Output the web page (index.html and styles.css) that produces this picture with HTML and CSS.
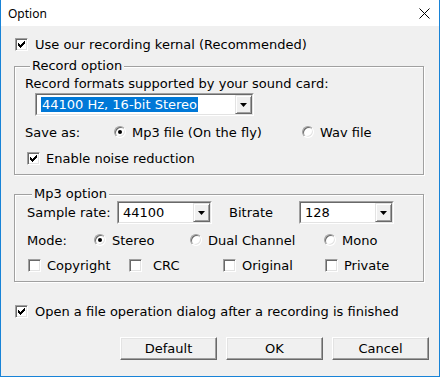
FILE: index.html
```html
<!DOCTYPE html>
<html lang="en">
<head>
    <meta charset="UTF-8">
    <title>Option</title>
    <link rel="stylesheet" href="styles.css">
</head>
<body>
    <div class="window">
        <div class="titlebar">
            <span class="title">Option</span>
            <svg class="close" width="11" height="11" viewBox="0 0 11 11">
                <path d="M0.5 0.5 L10.5 10.5 M10.5 0.5 L0.5 10.5" stroke="#000" stroke-width="1" fill="none"/>
            </svg>
        </div>

        <div class="dialog">
            <div class="row top-check">
                <span class="box"><svg width="11" height="11" viewBox="0 0 11 11"><path class="tick" d="M2 4h1v3H2z M3 5h1v3H3z M4 6h1v3H4z M5 5h1v3H5z M6 4h1v3H6z M7 3h1v3H7z M8 2h1v3H8z"/></svg></span>
                <span class="check-label">Use our recording kernal (Recommended)</span>
            </div>

            <fieldset class="group group-record">
                <legend>Record option</legend>
                <div class="row label-row">Record formats supported by your sound card:</div>
                <div class="combo combo-format">
                    <div class="combo-inner">
                        <span class="combo-text"><span class="selected">44100 Hz, 16-bit Stereo</span></span>
                        <span class="drop"><svg width="7" height="4" viewBox="0 0 7 4"><path d="M0 0h7L3.5 4z"/></svg></span>
                    </div>
                </div>
                <div class="row save-row">
                    <span class="save-label">Save as:</span>
                    <span class="option save-mp3"><span class="radio on"></span>Mp3 file (On the fly)</span>
                    <span class="option"><span class="radio"></span>Wav file</span>
                </div>
                <div class="row noise-row">
                    <span class="box"><svg width="11" height="11" viewBox="0 0 11 11"><path class="tick" d="M2 4h1v3H2z M3 5h1v3H3z M4 6h1v3H4z M5 5h1v3H5z M6 4h1v3H6z M7 3h1v3H7z M8 2h1v3H8z"/></svg></span>
                    <span class="check-label">Enable noise reduction</span>
                </div>
            </fieldset>

            <fieldset class="group group-mp3">
                <legend>Mp3 option</legend>
                <div class="row combo-row">
                    <span class="sample-label">Sample rate:</span>
                    <div class="combo combo-small">
                        <div class="combo-inner">
                            <span class="combo-text">44100</span>
                            <span class="drop"><svg width="7" height="4" viewBox="0 0 7 4"><path d="M0 0h7L3.5 4z"/></svg></span>
                        </div>
                    </div>
                    <span class="bitrate-label">Bitrate</span>
                    <div class="combo combo-small">
                        <div class="combo-inner">
                            <span class="combo-text">128</span>
                            <span class="drop"><svg width="7" height="4" viewBox="0 0 7 4"><path d="M0 0h7L3.5 4z"/></svg></span>
                        </div>
                    </div>
                </div>
                <div class="row mode-row">
                    <span class="mode-label">Mode:</span>
                    <span class="option mode-stereo"><span class="radio on"></span>Stereo</span>
                    <span class="option mode-dual"><span class="radio"></span>Dual Channel</span>
                    <span class="option"><span class="radio"></span>Mono</span>
                </div>
                <div class="row flags-row">
                    <span class="flag flag-copy"><span class="box"></span>Copyright</span>
                    <span class="flag flag-crc"><span class="box"></span>CRC</span>
                    <span class="flag flag-orig"><span class="box"></span>Original</span>
                    <span class="flag"><span class="box"></span>Private</span>
                </div>
            </fieldset>

            <div class="row bottom-check">
                <span class="box"><svg width="11" height="11" viewBox="0 0 11 11"><path class="tick" d="M2 4h1v3H2z M3 5h1v3H3z M4 6h1v3H4z M5 5h1v3H5z M6 4h1v3H6z M7 3h1v3H7z M8 2h1v3H8z"/></svg></span>
                <span class="check-label">Open a file operation dialog after a recording is finished</span>
            </div>

            <div class="buttons">
                <button class="btn">Default</button>
                <button class="btn btn-default">OK</button>
                <button class="btn">Cancel</button>
            </div>
        </div>
    </div>
</body>
</html>
```

FILE: styles.css
```css
* {
    box-sizing: border-box;
}
body {
    margin: 0;
    background: #fff;
    font-family: "DejaVu Sans", sans-serif;
    font-size: 13px;
    color: #000;
}
.window {
    width: 440px;
    height: 377px;
    border: 1px solid #1883d7;
    border-top: none;
    background: #f0f0f0;
    display: flex;
    flex-direction: column;
}
.titlebar {
    height: 26px;
    flex: none;
    background: #fff;
    display: flex;
    align-items: center;
    justify-content: space-between;
    padding: 0 9px 0 7px;
    font-family: "Noto Sans", sans-serif;
    font-size: 12px;
}
.close {
    display: block;
}
.dialog {
    padding: 0 0 0 13px;
    display: flex;
    flex-direction: column;
}
.row {
    display: flex;
    align-items: center;
    height: 22px;
    white-space: nowrap;
}

/* checkbox */
.box {
    width: 13px;
    height: 13px;
    flex: none;
    background: #fff;
    border: 1px solid;
    border-color: #a0a0a0 #fff #fff #a0a0a0;
    box-shadow: inset 1px 1px #696969, inset -1px -1px #e3e3e3;
    margin-right: 6px;
}
.box svg {
    display: block;
}
.tick {
    fill: #000;
}
.top-check {
    margin-top: 6px;
    height: 24px;
    padding-left: 1px;
}
.top-check .box,
.bottom-check .box {
    margin-right: 7px;
}

/* group boxes */
.group {
    margin: 0;
    padding: 0 0 5px;
    width: 410px;
    min-width: 0;
    border: 1px solid #a0a0a0;
    box-shadow: inset 1px 1px #fff, 1px 1px #fff;
}
.group legend {
    margin-left: 5px;
    padding: 0 2px;
    line-height: 14px;
    background: #f0f0f0;
}
.group-record {
    margin-top: 3px;
    padding-left: 10px;
}
.group-mp3 {
    margin-top: 12px;
    padding-left: 12px;
}
.label-row {
    height: 20px;
}

/* combo boxes */
.combo {
    height: 23px;
    flex: none;
    border: 1px solid;
    border-color: #a0a0a0 #fff #fff #a0a0a0;
    background: #fff;
}
.combo-inner {
    height: 100%;
    display: flex;
    align-items: center;
    border: 1px solid;
    border-color: #696969 #e3e3e3 #e3e3e3 #696969;
}
.combo-text {
    flex: 1;
    padding-left: 4px;
}
.selected {
    background: #0078d7;
    color: #fff;
    padding: 0 1px;
    line-height: 15px;
    display: inline-block;
}
.drop {
    width: 17px;
    height: 100%;
    flex: none;
    display: flex;
    align-items: center;
    justify-content: center;
    background: #f0f0f0;
    border: 1px solid;
    border-color: #e3e3e3 #696969 #696969 #e3e3e3;
    box-shadow: inset 1px 1px #fff, inset -1px -1px #a0a0a0;
}
.drop svg {
    display: block;
}
.combo-format {
    width: 219px;
    margin-left: 10px;
}
.combo-small {
    width: 95px;
}

/* radio buttons */
.option {
    display: flex;
    align-items: center;
}
.radio {
    width: 12px;
    height: 12px;
    flex: none;
    border-radius: 50%;
    background: #fff;
    border: 1px solid;
    border-color: #a0a0a0 #fff #fff #a0a0a0;
    box-shadow: inset 1px 1px #696969, inset -1px -1px #e3e3e3;
    margin-right: 6px;
    display: flex;
    align-items: center;
    justify-content: center;
}
.radio.on::after {
    content: "";
    width: 4px;
    height: 4px;
    border-radius: 50%;
    background: #000;
}

.save-row {
    margin-top: 5px;
}
.save-label {
    width: 89px;
}
.save-mp3 {
    width: 188px;
}
.noise-row {
    margin-top: 4px;
    padding-left: 2px;
}

.combo-row {
    height: 23px;
}
.sample-label {
    width: 90px;
}
.bitrate-label {
    margin-left: 17px;
    width: 70px;
}
.mode-row {
    margin-top: 5px;
}
.mode-label {
    width: 67px;
}
.mode-stereo {
    width: 96px;
}
.mode-dual {
    width: 134px;
}
.flags-row {
    margin-top: 3px;
    padding-left: 1px;
}
.flag {
    display: flex;
    align-items: center;
}
.flag-copy {
    width: 101px;
}
.flag-crc {
    width: 94px;
}
.flag-crc .box {
    margin-right: 11px;
}
.flag-orig {
    width: 102px;
}

.bottom-check {
    margin-top: 18px;
    padding-left: 1px;
}

/* buttons */
.buttons {
    display: flex;
    justify-content: flex-end;
    gap: 9px;
    margin-top: 15px;
    padding-right: 10px;
}
.btn {
    width: 97px;
    height: 23px;
    padding: 0;
    font: inherit;
    color: #000;
    background: #f0f0f0;
    border: 1px solid;
    border-color: #fff #696969 #696969 #fff;
    box-shadow: inset -1px -1px #a0a0a0, inset 1px 1px #e3e3e3;
}
```
